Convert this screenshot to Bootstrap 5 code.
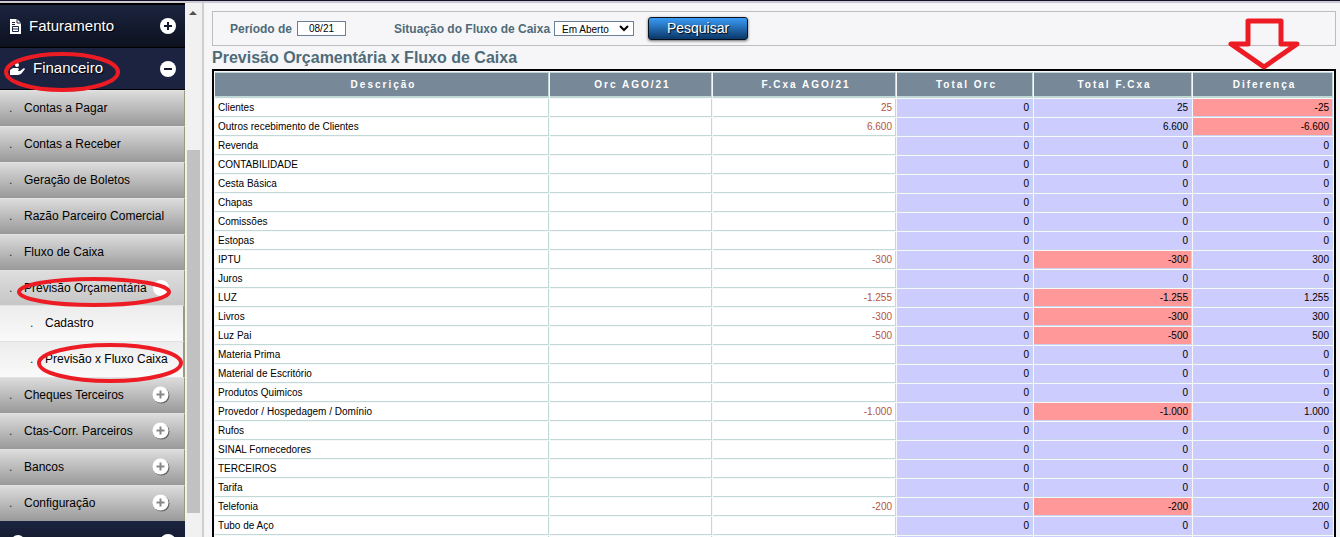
<!DOCTYPE html>
<html lang="pt-BR">
<head>
<meta charset="utf-8">
<meta name="viewport" content="width=device-width, initial-scale=1">
<title>Previsão Orçamentária x Fluxo de Caixa</title>
<link rel="stylesheet" href="https://cdn.jsdelivr.net/npm/bootstrap@5.3.0/dist/css/bootstrap.min.css">
<style>
body{font-family:"Liberation Sans",Arial,sans-serif;background:#f6f6f8;color:#000}
.topline{height:3px;background:#cdc9d3;border-top:1px solid #14102a}
.side{width:185px;background:#0d1120;border-top:2px solid #000}
.side a{color:#000;text-decoration:none}
.side .menu-head{height:43px;padding:0 9px 0 6px;font-size:15px;color:#fff;border-bottom:1px solid #000;background:linear-gradient(#1b2440,#0d111e);text-shadow:1px 1px 1px #000}
.side .menu-head.opened{height:42px;background:#1b2340}
.menu-item{height:36px;font-size:12px;padding:0 14px 2px 9px;border-top:1px solid #e2e2e2;border-right:1px solid #9a9a7c;background:linear-gradient(#dcdcdc,#999)}
.menu-item.opened{height:35px;padding-bottom:1px;background:linear-gradient(#dedede,#c6c6c6)}
.menu-sub{background:linear-gradient(#ececec,#fafafa);padding-left:30px;border-right-width:2px}
.dot-mark{width:15px;flex:none;color:#333}
.ring{pointer-events:none;z-index:3}
.ring-fin{left:4px;top:4px}
.ring-prev{left:15px;top:4px}
.ring-fluxo{left:36px;top:0}
.sbar{width:17px;background:#f1f1f1}
.sbar .thumb{height:363px;margin:135px 2px 0 2px;background:#c1c1c1}
.sbar svg{margin:7px 0 0 4px}
.pane{border-left:2px solid #cfcfd2;padding:8px 4px 0 8px}
.filters{border:1px solid #bdbdbd;height:35px;padding-left:17px;font-size:12px;font-weight:bold;color:#4f6b78}
.filters input,.filters select{height:15px;border:1px solid #6b7f95;background:#fff;font-size:10px;color:#000;padding:0;border-radius:0}
.filters input{width:49px;text-align:center;margin-left:5px}
.filters select{width:80px;appearance:none;padding-left:7px;margin-left:4px;background:#fff url("data:image/svg+xml,%3Csvg xmlns='http://www.w3.org/2000/svg' width='10' height='7'%3E%3Cpath d='M1 1l4 4 4-4' fill='none' stroke='%23000' stroke-width='2'/%3E%3C/svg%3E") no-repeat right 4px center}
.btn-search{width:100px;height:23px;margin:0 0 1px 14px;padding:0;font-size:14px;line-height:20px;color:#fff;border:1px solid #05101e;border-radius:3px;background:linear-gradient(#3a9bf5,#0a3767);box-shadow:0 1px 3px #666;text-shadow:1px 1px 1px #000}
.title-line{font-size:16px;line-height:18px;font-weight:bold;color:#4f6b78;margin:3px 0 2px}
.grid-budget{width:100%;table-layout:fixed;border:2px solid #000;border-collapse:separate;border-spacing:1px;font-size:10px;line-height:12px;background:#f6f8fa}
.grid-budget th{height:26px;background:#778899;color:#fff;text-align:center;letter-spacing:2px;border:1px solid #c1d9d6;border-left:0;border-bottom-width:2px;padding:0 0 0 4px}
.grid-budget td{height:18px;padding:0 4px 0 3px;background:#fff;border:solid #c1d9d6;border-width:0 1px 1px 0;white-space:nowrap}
.grid-budget td.num{text-align:right;padding-right:3px}
.grid-budget td.val{color:#b5533c}
.grid-budget td.total{background:#ccccff;border-color:#c8d4ee}
.grid-budget td.neg{background:#ff9999}
.w-a{width:162px}.w-b{width:183px}.w-c{width:136px}.w-d{width:158px}.w-e{width:140px}
.arrow{right:34px;top:-52px;z-index:3}
</style>
</head>
<body class="vh-100 overflow-hidden d-flex flex-column">
<svg class="d-none">
<symbol id="plus" viewBox="0 0 16 16"><circle cx="8" cy="8" r="8" fill="#fff"/><path d="M8 4v8M4 8h8" stroke="#12182b" stroke-width="2"/></symbol>
<symbol id="minus" viewBox="0 0 16 16"><circle cx="8" cy="8" r="8" fill="#fff"/><path d="M4 8h8" stroke="#12182b" stroke-width="2"/></symbol>
<symbol id="plus-sm" viewBox="0 0 18 18"><circle cx="9.500" cy="9.500" r="8" fill="#666"/><circle cx="8.500" cy="8.500" r="8" fill="#fff"/><path d="M8.500 4.500v8M4.500 8.500h8" stroke="#888" stroke-width="2"/></symbol>
<symbol id="minus-sm" viewBox="0 0 18 18"><circle cx="9" cy="9" r="8" fill="#fff"/><path d="M6 7h6" stroke="#999" stroke-width="2"/></symbol>
</svg>
<div class="topline flex-shrink-0"></div>
<div class="d-flex flex-grow-1 overflow-hidden">
<nav class="side flex-shrink-0 overflow-hidden" aria-label="Menu">
<a href="#" class="menu-head d-flex align-items-center"><svg class="ms-1" width="11" height="15" viewBox="0 0 11 15"><path d="M0 0h7l4 4v11H0z" fill="#fff"/><path d="M7 0v4h4M2 3.500h3M2 5.500h3M2.500 7.500h6v5h-6zM2 10h7" fill="none" stroke="#1b2440"/></svg><span class="ms-2 me-auto">Faturamento</span><svg width="16" height="16"><use href="#plus"/></svg></a>
<a href="#" class="menu-head opened d-flex align-items-center position-relative"><svg class="ms-1" width="15" height="14" viewBox="0 0 15 14"><circle cx="7" cy="3" r="2" fill="#fff"/><path d="M0 8l3-2h5l1 1-1 2h2l4-3 1 1-4 5-3 1H0z" fill="#fff"/></svg><span class="ms-2 me-auto">Financeiro</span><svg width="16" height="16"><use href="#minus"/></svg><svg class="ring ring-fin position-absolute" width="117" height="41"><ellipse cx="58" cy="20" rx="56" ry="18" fill="none" stroke="#ed1c24" stroke-width="4"/></svg></a>
<a href="#" class="menu-item d-flex align-items-center"><span class="dot-mark">.</span>Contas a Pagar</a>
<a href="#" class="menu-item d-flex align-items-center"><span class="dot-mark">.</span>Contas a Receber</a>
<a href="#" class="menu-item d-flex align-items-center"><span class="dot-mark">.</span>Geração de Boletos</a>
<a href="#" class="menu-item d-flex align-items-center text-nowrap"><span class="dot-mark">.</span>Razão Parceiro Comercial</a>
<a href="#" class="menu-item d-flex align-items-center"><span class="dot-mark">.</span>Fluxo de Caixa</a>
<a href="#" class="menu-item opened d-flex align-items-center position-relative"><span class="dot-mark">.</span><span class="me-auto text-nowrap">Previsão Orçamentária</span><svg width="18" height="18"><use href="#minus-sm"/></svg><svg class="ring ring-prev position-absolute" width="158" height="36"><ellipse cx="79" cy="17" rx="75" ry="13" fill="none" stroke="#ed1c24" stroke-width="4"/></svg></a>
<a href="#" class="menu-item menu-sub d-flex align-items-center"><span class="dot-mark">.</span>Cadastro</a>
<a href="#" class="menu-item menu-sub d-flex align-items-center position-relative text-nowrap"><span class="dot-mark">.</span>Previsão x Fluxo Caixa<svg class="ring ring-fluxo position-absolute" width="147" height="42"><ellipse cx="74" cy="21" rx="71" ry="18" fill="none" stroke="#ed1c24" stroke-width="4"/></svg></a>
<a href="#" class="menu-item d-flex align-items-center"><span class="dot-mark">.</span><span class="me-auto">Cheques Terceiros</span><svg width="18" height="18"><use href="#plus-sm"/></svg></a>
<a href="#" class="menu-item d-flex align-items-center"><span class="dot-mark">.</span><span class="me-auto">Ctas-Corr. Parceiros</span><svg width="18" height="18"><use href="#plus-sm"/></svg></a>
<a href="#" class="menu-item d-flex align-items-center"><span class="dot-mark">.</span><span class="me-auto">Bancos</span><svg width="18" height="18"><use href="#plus-sm"/></svg></a>
<a href="#" class="menu-item d-flex align-items-center"><span class="dot-mark">.</span><span class="me-auto">Configuração</span><svg width="18" height="18"><use href="#plus-sm"/></svg></a>
<a href="#" class="menu-head d-flex align-items-center" aria-label="Próximo módulo"><svg class="ms-1 me-auto" width="16" height="16"><circle cx="8" cy="8" r="7" fill="#fff"/></svg><svg width="16" height="16"><use href="#plus"/></svg></a>
</nav>
<div class="sbar flex-shrink-0"><svg class="d-block" width="9" height="5"><path d="M0 5l4-4 4 4z" fill="#505050"/></svg><div class="thumb"></div></div>
<main class="pane flex-grow-1 overflow-hidden">
<form class="filters d-flex align-items-center" onsubmit="return false">
<label for="periodo">Período de</label><input id="periodo" type="text" value="08/21">
<label for="situacao" class="ms-5">Situação do Fluxo de Caixa</label><select id="situacao"><option>Em Aberto</option></select>
<button type="submit" class="btn btn-search">Pesquisar</button>
</form>
<h1 class="title-line">Previsão Orçamentária x Fluxo de Caixa</h1>
<div class="position-relative">
<svg class="arrow position-absolute" width="76" height="54"><path d="M22 4h33v23h16L38 50 5 27h17z" fill="none" stroke="#ed1c24" stroke-width="5" stroke-linejoin="round"/></svg>
<table class="grid-budget">
<colgroup><col><col class="w-a"><col class="w-b"><col class="w-c"><col class="w-d"><col class="w-e"></colgroup>
<thead><tr><th>Descrição</th><th>Orc AGO/21</th><th>F.Cxa AGO/21</th><th>Total Orc</th><th>Total F.Cxa</th><th>Diferença</th></tr></thead>
<tbody id="linhas"></tbody>
<tfoot><tr><td></td><td></td><td></td><td class="total"></td><td class="total"></td><td class="total"></td></tr></tfoot>
</table>
</div>
</main>
</div>
<script>
// descrição, fluxo de caixa (vazio = zero), diferença
const dados = [["Clientes","25","-25"],["Outros recebimento de Clientes","6.600","-6.600"],["Revenda"],["CONTABILIDADE"],["Cesta Básica"],["Chapas"],["Comissões"],["Estopas"],["IPTU","-300","300"],["Juros"],["LUZ","-1.255","1.255"],["Livros","-300","300"],["Luz Pai","-500","500"],["Materia Prima"],["Material de Escritório"],["Produtos Quimicos"],["Provedor / Hospedagem / Domínio","-1.000","1.000"],["Rufos"],["SINAL Fornecedores"],["TERCEIROS"],["Tarifa"],["Telefonia","-200","200"],["Tubo de Aço"]];
const total = v => `<td class="num total${v[0] === "-" ? " neg" : ""}">${v}</td>`;
document.getElementById("linhas").innerHTML = dados.map(([d, f = "", x = "0"]) =>
  `<tr><td>${d}</td><td></td><td class="num val">${f}</td>${total("0")}${total(f || "0")}${total(x)}</tr>`).join("");
</script>
<script src="https://cdn.jsdelivr.net/npm/bootstrap@5.3.0/dist/js/bootstrap.bundle.min.js"></script>
</body>
</html>
